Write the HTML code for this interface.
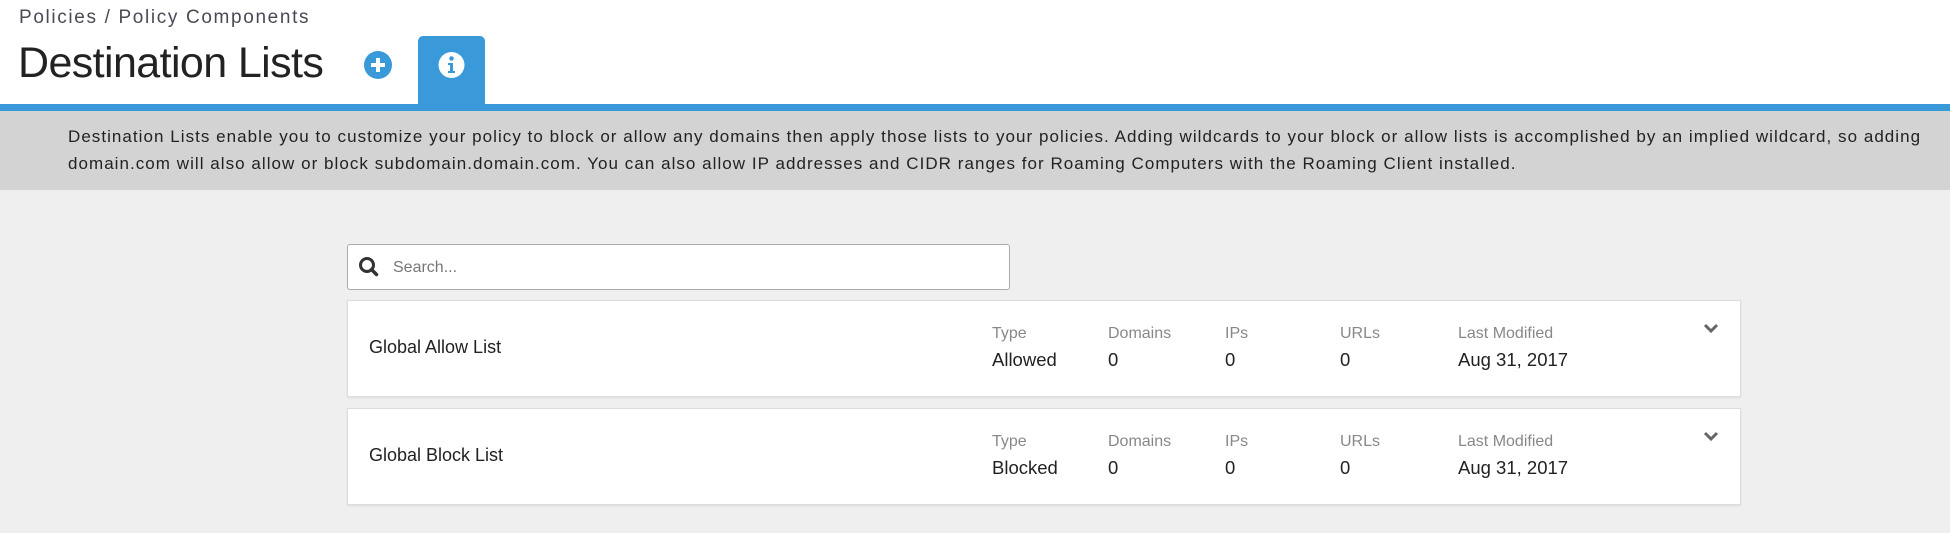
<!DOCTYPE html>
<html><head><style>
body{margin:0;width:1950px;height:533px;background:#efefef;font-family:"Liberation Sans",sans-serif;position:relative;overflow:hidden;color:#222}
.hdr{position:absolute;left:0;top:0;width:1950px;height:104px;background:#fff}
.bc{position:absolute;left:19px;top:7px;font-size:19px;letter-spacing:1.65px;color:#4a4a55}
.title{position:absolute;left:18px;top:39px;font-size:43px;color:#222;letter-spacing:-0.6px}
.plus{position:absolute;left:364px;top:51px;width:28px;height:28px;border-radius:50%;background:#3a9ad9}
.tab{position:absolute;left:418px;top:36px;width:67px;height:70px;background:#3a9ad9;border-radius:5px 5px 0 0}
.line{position:absolute;left:0;top:104px;width:1950px;height:7px;background:#3a9ad9}
.band{position:absolute;left:0;top:111px;width:1950px;height:79px;background:#d3d3d3;font-size:17px;letter-spacing:1.04px;color:#222;line-height:27px}
.band div{position:absolute;left:68px;white-space:nowrap}
.search{position:absolute;left:347px;top:244px;width:661px;height:44px;background:#fff;border:1px solid #aaa;border-radius:3px}
.search span{position:absolute;left:45px;top:14px;font-size:16px;color:#777}
.card{position:absolute;left:347px;width:1392px;height:95px;background:#fff;border:1px solid #ddd;box-shadow:0 1px 2px rgba(0,0,0,.08)}
.name{position:absolute;left:21px;top:36px;font-size:18px;color:#222}
.col{position:absolute;top:24px;font-size:16px;color:#888}
.col b{display:block;font-weight:normal;font-size:18.5px;color:#222;margin-top:6px}
.chev{position:absolute;left:1355px;top:22px}
</style></head><body>
<div class="hdr"></div>
<div class="bc">Policies / Policy Components</div>
<div class="title">Destination Lists</div>
<div class="plus"><svg width="28" height="28"><path d="M14 7v14M7 14h14" stroke="#fff" stroke-width="4"/></svg></div>
<div class="tab"><svg width="67" height="68"><circle cx="33.5" cy="29" r="13" fill="#fff"/><circle cx="33.5" cy="22.5" r="2.3" fill="#3a9ad9"/><path d="M30 27h5v8h2v2h-7v-2h2v-6h-2z" fill="#3a9ad9"/></svg></div>
<div class="line"></div>
<div class="band">
<div style="top:12px">Destination Lists enable you to customize your policy to block or allow any domains then apply those lists to your policies. Adding wildcards to your block or allow lists is accomplished by an implied wildcard, so adding</div>
<div style="top:39px">domain.com will also allow or block subdomain.domain.com. You can also allow IP addresses and CIDR ranges for Roaming Computers with the Roaming Client installed.</div>
</div>
<div class="search"><svg style="position:absolute;left:10px;top:11px" width="22" height="22"><circle cx="9" cy="9" r="6.5" fill="none" stroke="#333" stroke-width="3"/><path d="M13.5 13.5l5 5" stroke="#333" stroke-width="3.5" stroke-linecap="round"/></svg><span>Search...</span></div>
<div class="card" style="top:300px">
<div class="name">Global Allow List</div>
<div class="col" style="left:644px">Type<b>Allowed</b></div>
<div class="col" style="left:760px">Domains<b>0</b></div>
<div class="col" style="left:877px">IPs<b>0</b></div>
<div class="col" style="left:992px">URLs<b>0</b></div>
<div class="col" style="left:1110px">Last Modified<b>Aug 31, 2017</b></div>
<svg class="chev" width="16" height="12"><path d="M2 2l6 6 6-6" fill="none" stroke="#666" stroke-width="3"/></svg>
</div>
<div class="card" style="top:408px">
<div class="name">Global Block List</div>
<div class="col" style="left:644px">Type<b>Blocked</b></div>
<div class="col" style="left:760px">Domains<b>0</b></div>
<div class="col" style="left:877px">IPs<b>0</b></div>
<div class="col" style="left:992px">URLs<b>0</b></div>
<div class="col" style="left:1110px">Last Modified<b>Aug 31, 2017</b></div>
<svg class="chev" width="16" height="12"><path d="M2 2l6 6 6-6" fill="none" stroke="#666" stroke-width="3"/></svg>
</div>
</body></html>
